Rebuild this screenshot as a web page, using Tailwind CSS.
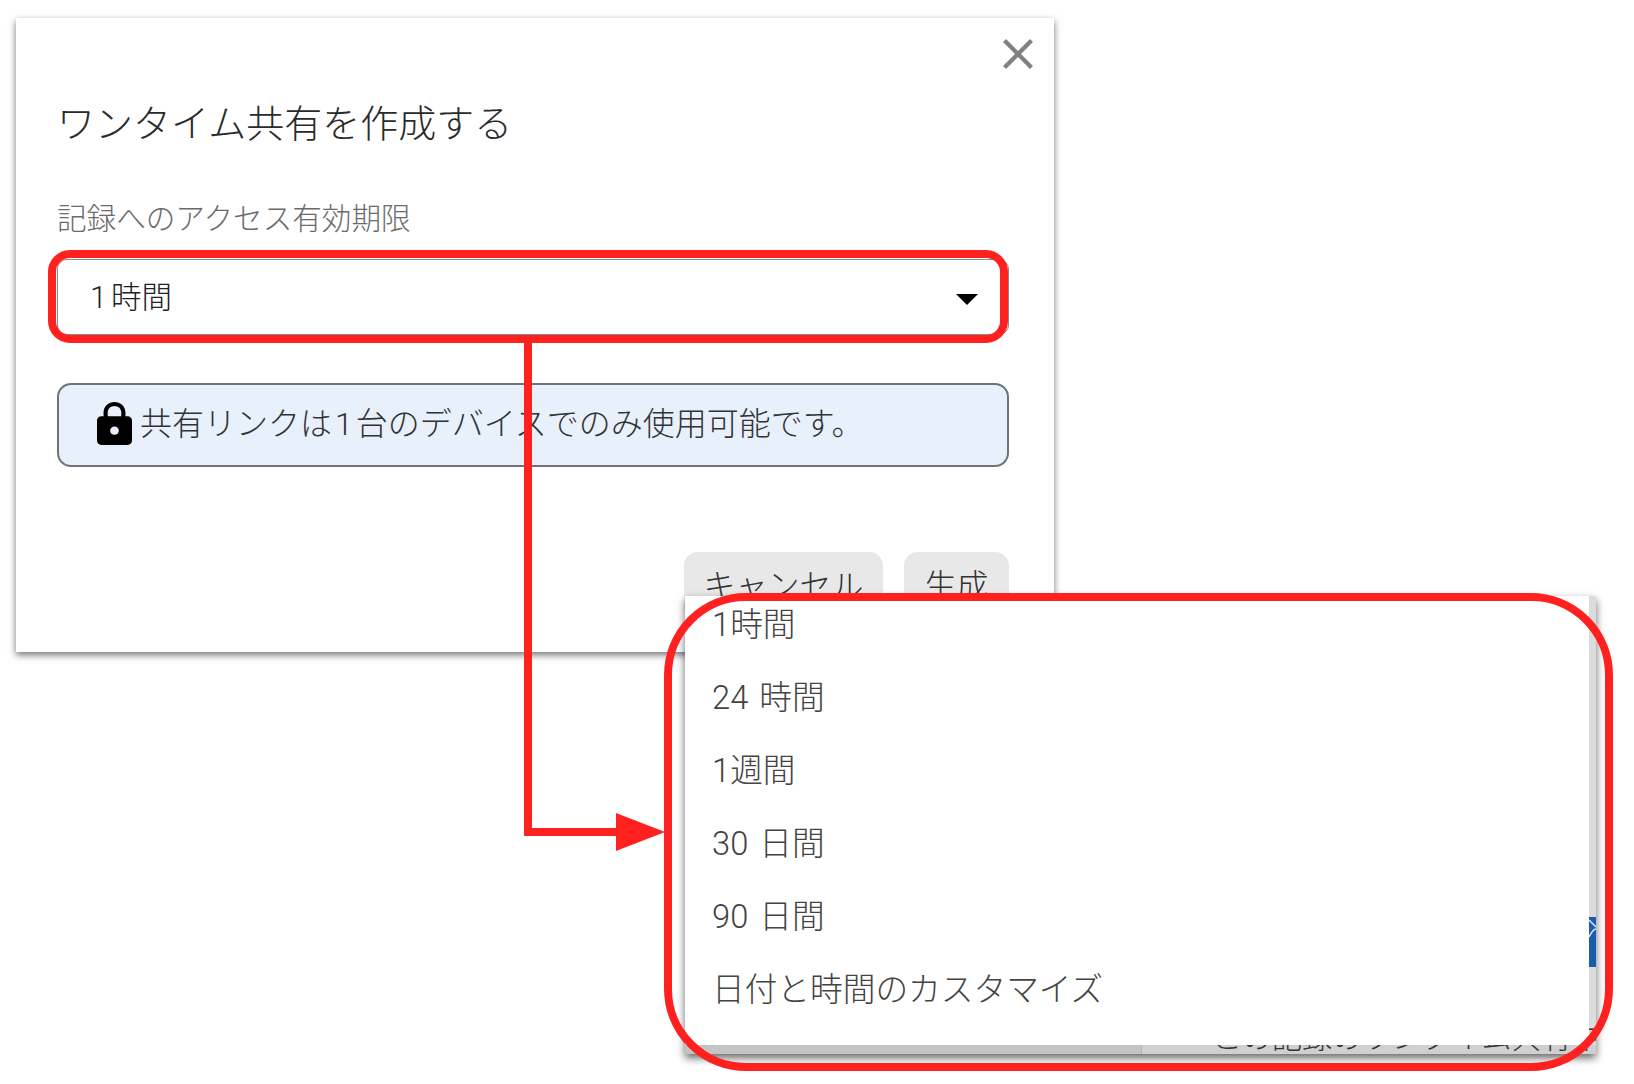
<!DOCTYPE html>
<html lang="ja">
<head>
    <meta charset="UTF-8">
    <title>ワンタイム共有を作成する</title>
    <script src="https://cdn.jsdelivr.net/npm/@tailwindcss/browser@4"></script>
</head>
<body class="bg-white font-['Roboto','Noto_Sans_CJK_JP',sans-serif]">
    <div class="relative w-[1634px] h-[1084px] overflow-hidden bg-white pl-4 pt-[18px]">

        <!-- ダイアログ -->
        <div class="relative w-[1038px] h-[634px] bg-white shadow-[0_3px_7px_rgba(0,0,0,0.55)] px-[41px] pt-[83px]">
            <button class="absolute right-[21px] top-[21px] text-[#808080]">
                <svg class="block w-[30px] h-[30px]" viewBox="5 5 14 14" fill="currentColor"><path d="M19 6.41 17.59 5 12 10.59 6.41 5 5 6.41 10.59 12 5 17.59 6.41 19 12 13.41 17.59 19 19 17.59 13.41 12z"/></svg>
            </button>

            <h2 class="h-[46px] text-[38px] leading-[46px] font-light text-[#2a2a2a] whitespace-nowrap">ワンタイム共有を作成する</h2>

            <p class="mt-[52px] h-[40px] text-[29.6px] leading-[40px] font-light text-[#6b6b6b] whitespace-nowrap">記録へのアクセス有効期限</p>

            <!-- セレクト -->
            <div class="mt-[20px] w-[952px] h-[76px] flex items-center justify-between border border-[#8a8a8a] rounded-[10px] pl-[32px] pr-[30px]">
                <span class="pt-[2px] text-[30.5px] font-light text-[#222] whitespace-nowrap">1<span class="pl-[4px]">時間</span></span>
                <span class="mt-[4px] w-0 h-0 border-x-[11px] border-x-transparent border-t-[11px] border-t-black"></span>
            </div>

            <!-- 注意書き -->
            <div class="mt-[48px] w-[952px] h-[84px] flex items-center gap-2 pl-[38px] bg-[#e8f0fb] border-2 border-[#6f7378] rounded-[14px]">
                <svg class="shrink-0 w-[35px] h-[45px] mb-[2px]" viewBox="4 1 16 22" preserveAspectRatio="none" fill="#000"><path d="M18 8h-1V6c0-2.76-2.24-5-5-5S7 3.24 7 6v2H6c-1.1 0-2 .9-2 2v10c0 1.1.9 2 2 2h12c1.1 0 2-.9 2-2V10c0-1.1-.9-2-2-2zm-6 9c-1.1 0-2-.9-2-2s.9-2 2-2 2 .9 2 2-.9 2-2 2zm3.1-9H8.9V6c0-1.71 1.39-3.1 3.1-3.1 1.71 0 3.1 1.39 3.1 3.1v2z"/></svg>
                <span class="pb-[2px] text-[32px] font-light text-[#333] whitespace-nowrap">共有リンクは<span class="px-[3px]">1</span>台のデバイスでのみ使用可能です。</span>
            </div>

            <!-- ボタン -->
            <div class="mt-[85px] w-[952px] flex justify-end gap-[21px]">
                <button class="w-[199px] h-[70px] pb-[2px] rounded-[14px] bg-[#e8e8e8] text-[32px] font-light text-[#333]">キャンセル</button>
                <button class="w-[105px] h-[70px] pb-[2px] rounded-[14px] bg-[#e8e8e8] text-[32px] font-light text-[#333]">生成</button>
            </div>
        </div>

        <!-- 後ろの画面の切れ端 -->
        <div class="absolute left-[685px] top-[596px] w-[911px] h-[458px] bg-[#dcdcdc] shadow-[0_4px_8px_rgba(0,0,0,0.6)] overflow-hidden">
            <div class="absolute left-0 right-0 bottom-0 h-[9px] flex bg-[#c4c4c4]">
                <div class="w-[457px] border-r border-[#b4b4b4]"></div>
                <div class="flex-1 bg-[#d0d0d0]"></div>
            </div>
            <div class="absolute right-0 top-[321px] w-[7px] h-[50px] bg-[#1c5cb0] overflow-hidden">
                <svg class="block" width="7" height="22" fill="none" stroke="#dbe6f5" stroke-width="1.5"><path d="M0 3L7 10M0 20C3 14 5 12 7 12"/></svg>
            </div>
            <span class="absolute left-[527px] top-[422px] text-[30px] leading-[40px] font-light text-[#333] whitespace-nowrap">この記録のワンタイム共有中</span>

            <!-- メニュー -->
            <ul class="relative w-[904px] h-[449px] bg-white text-[32.7px] font-light text-[#444] pl-[27px] [word-spacing:3px]">
                <li class="h-[73px] leading-[59px]">1時間</li>
                <li class="h-[73px] leading-[59px]">24 時間</li>
                <li class="h-[73px] leading-[59px]">1週間</li>
                <li class="h-[73px] leading-[59px]">30 日間</li>
                <li class="h-[73px] leading-[59px]">90 日間</li>
                <li class="h-[73px] leading-[59px] whitespace-nowrap">日付と時間のカスタマイズ</li>
            </ul>
        </div>

        <!-- 赤い注釈 -->
        <svg class="absolute left-0 top-0" width="1634" height="1084" fill="none" stroke="#ff2020" stroke-width="8">
            <rect x="52" y="254" width="952" height="85" rx="18"/>
            <rect x="668" y="597" width="941" height="470" rx="78"/>
            <path d="M528 339V832H620"/>
            <path d="M616 813L665 832L616 851Z" fill="#ff2020" stroke="none"/>
        </svg>
    </div>
</body>
</html>
